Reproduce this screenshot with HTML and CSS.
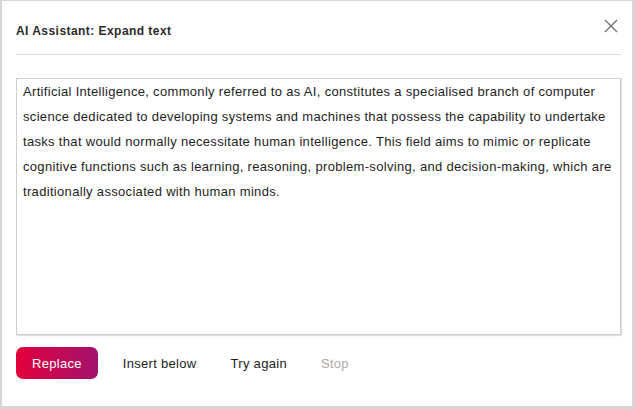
FILE: index.html
```html
<!DOCTYPE html>
<html>
<head>
<meta charset="utf-8">
<link rel="stylesheet" href="styles.css">
</head>
<body>
<div class="dialog">
  <div class="header">
    <h1 class="title">AI Assistant: Expand text</h1>
    <button class="close" aria-label="Close">
      <svg width="14" height="14" viewBox="0 0 14 14"><path d="M1 1L13 13M13 1L1 13" stroke="#6b6b6b" stroke-width="1.2" fill="none"/></svg>
    </button>
  </div>
  <div class="output"><p class="output-text">Artificial Intelligence, commonly referred to as AI, constitutes a specialised branch of computer science dedicated to developing systems and machines that possess the capability to undertake tasks that would normally necessitate human intelligence. This field aims to mimic or replicate cognitive functions such as learning, reasoning, problem-solving, and decision-making, which are traditionally associated with human minds.</p></div>
  <div class="actions">
    <button class="btn primary">Replace</button>
    <button class="btn">Insert below</button>
    <button class="btn">Try again</button>
    <button class="btn disabled">Stop</button>
  </div>
</div>
</body>
</html>
```
FILE: styles.css
```css
html, body {
  margin: 0;
  padding: 0;
}
body {
  width: 635px;
  height: 409px;
  background: #d6d6d6;
  font-family: "Liberation Sans", Arial, sans-serif;
  box-sizing: border-box;
  padding: 1px 3px 3px 2px;
}
.dialog {
  background: #fff;
  height: 405px;
  box-sizing: border-box;
  padding: 0 11px 0 14px;
  display: flex;
  flex-direction: column;
}
.header {
  height: 54px;
  flex: none;
  border-bottom: 1px solid #dcdce0;
  display: flex;
  align-items: center;
  justify-content: space-between;
  margin-bottom: 23px;
  padding-top: 6px;
  box-sizing: border-box;
}
.title {
  margin: 0;
  font-size: 12px;
  font-weight: bold;
  letter-spacing: 0.45px;
  color: #2b2b2b;
}
.close {
  border: 0;
  background: none;
  padding: 0;
  margin-right: 3px;
  margin-top: -9px;
  width: 14px;
  height: 14px;
  display: flex;
}
.output {
  height: 257px;
  flex: none;
  box-sizing: border-box;
  border: 1px solid #cfcfcf;
  box-shadow: 1px 1px 1px rgba(0,0,0,0.12);
  padding: 0 8px 0 6px;
  font-size: 13px;
  line-height: 25px;
  letter-spacing: 0.32px;
  color: #1e1e1e;
}
.output-text {
  margin: 0;
}
.actions {
  display: flex;
  align-items: center;
  gap: 16px;
  margin-top: 12px;
}
.btn {
  height: 32px;
  border: 0;
  background: none;
  padding: 0 9px;
  font-family: "Liberation Sans", Arial, sans-serif;
  font-size: 13px;
  letter-spacing: 0.3px;
  color: #222;
  border-radius: 7px;
}
.btn.primary {
  padding: 0 16px;
  color: #fff;
  background: linear-gradient(90deg, #e2003b, #a3126f);
}
.btn.disabled {
  color: #aaa;
}
```
